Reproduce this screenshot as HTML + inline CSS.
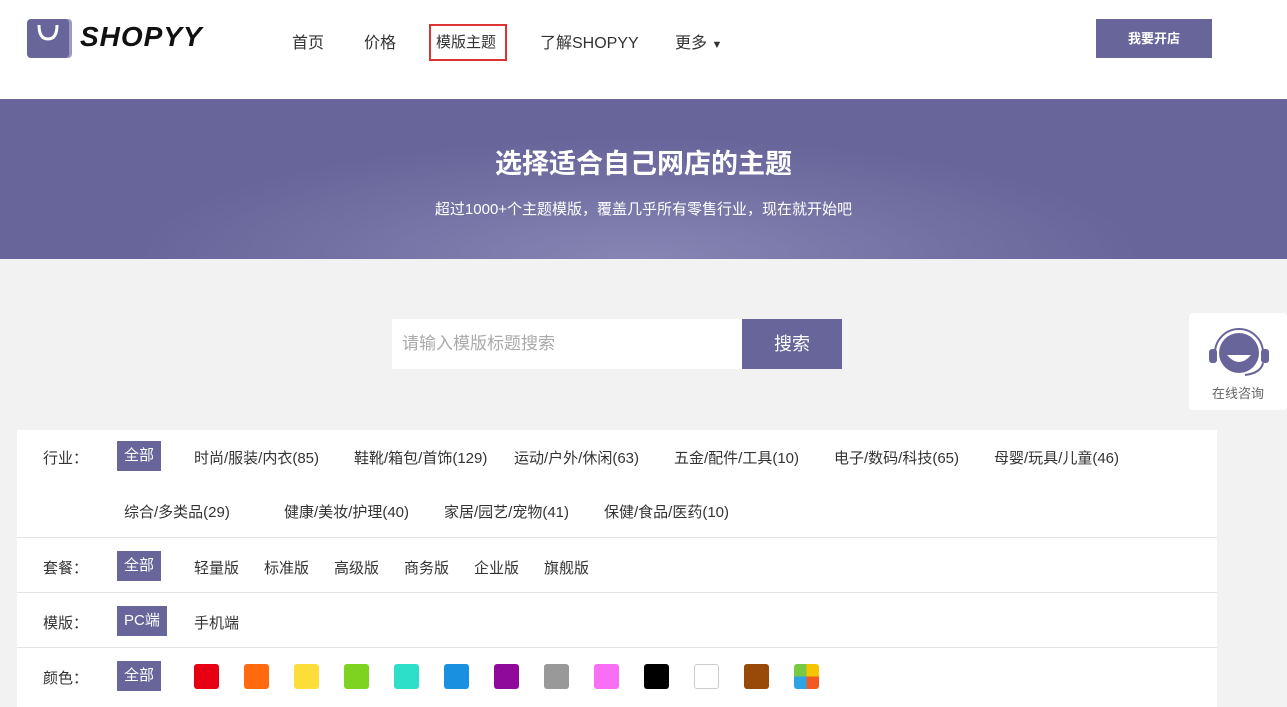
<!DOCTYPE html>
<html><head><meta charset="utf-8"><style>
*{margin:0;padding:0;box-sizing:border-box}
body{width:1287px;height:707px;overflow:hidden;background:#f2f2f2;font-family:"Liberation Sans","Noto Sans CJK SC",sans-serif;color:#333;position:relative}
.hd{position:absolute;left:0;top:0;width:1287px;height:99px;background:#fff}
.logo{position:absolute;left:27px;top:17px}
.logotxt{position:absolute;left:80px;top:21px;font-size:28px;font-weight:bold;font-style:italic;color:#111;letter-spacing:1px}
.nav{position:absolute;top:29px;font-size:16px;color:#333}
.act{position:absolute;left:429px;top:24px;width:78px;height:37px;border:2px solid #d33}
.btn{position:absolute;left:1096px;top:19px;width:116px;height:39px;background:#67659a;color:#fff;font-size:13px;text-align:center;line-height:39px;font-weight:bold}
.ban{position:absolute;left:0;top:99px;width:1287px;height:160px;background:radial-gradient(ellipse 500px 120px at 640px 160px,#8785b3,#67659a)}
.ban h1{position:absolute;width:100%;top:43px;text-align:center;color:#fff;font-size:27px}
.ban p{position:absolute;width:100%;top:99px;text-align:center;color:#fff;font-size:15px}
.srch{position:absolute;left:392px;top:319px;width:350px;height:50px;background:#fff;color:#aaa;font-size:17px;line-height:50px;padding-left:10px}
.sbtn{position:absolute;left:742px;top:319px;width:100px;height:50px;background:#67659a;color:#fff;font-size:18px;text-align:center;line-height:50px}
.kf{position:absolute;left:1189px;top:313px;width:98px;height:97px;background:#fff;border-radius:4px}
.kf span{position:absolute;top:70px;width:100%;text-align:center;font-size:13px;color:#666}
.pan{position:absolute;left:17px;top:430px;width:1200px;height:277px;background:#fff}
.row{position:absolute;left:0;width:1200px;border-bottom:1px solid #e5e5e5}
.t{position:absolute;font-size:15px;color:#333;white-space:nowrap}
.all{position:absolute;background:#67659a;color:#fff;font-size:15px;height:30px;line-height:30px;padding:0 7px}
.sw{position:absolute;top:234px;width:25px;height:25px;border-radius:3px}
</style></head><body>
<div class="hd">
<svg class="logo" width="48" height="42" viewBox="0 0 48 42"><rect x="3" y="2" width="42" height="39" rx="4" fill="#9b99c2"/><rect x="0" y="2" width="42" height="39" rx="4" fill="#67659a"/><path d="M12 8 Q12 22 21 22 Q30 22 30 8" stroke="#fff" stroke-width="3" fill="none"/></svg>
<div class="logotxt">SHOPYY</div>
<div class="nav" style="left:292px">首页</div>
<div class="nav" style="left:364px">价格</div>
<div class="nav" style="left:436px;font-size:15px;top:31px">模版主题</div>
<div class="act"></div>
<div class="nav" style="left:540px">了解SHOPYY</div>
<div class="nav" style="left:675px">更多 <span style="font-size:11px">▼</span></div>
<div class="btn">我要开店</div>
</div>
<div class="ban"><h1>选择适合自己网店的主题</h1><p>超过1000+个主题模版，覆盖几乎所有零售行业，现在就开始吧</p></div>
<div class="srch">请输入模版标题搜索</div><div class="sbtn">搜索</div>
<div class="kf"><svg style="position:absolute;left:16px;top:8px" width="68" height="60" viewBox="0 0 68 60"><path d="M10 32 A24 24 0 0 1 58 32" stroke="#67659a" stroke-width="2" fill="none"/><rect x="4" y="28" width="8" height="14" rx="3" fill="#67659a"/><rect x="56" y="28" width="8" height="14" rx="3" fill="#67659a"/><circle cx="34" cy="32" r="20" fill="#67659a"/><path d="M22 34 Q34 48 46 34" fill="#fff"/><path d="M58 42 Q56 52 40 54" stroke="#67659a" stroke-width="2" fill="none"/></svg><span>在线咨询</span></div>
<div class="pan">
<div class="row" style="top:0;height:108px"></div>
<div class="row" style="top:108px;height:55px"></div>
<div class="row" style="top:163px;height:55px"></div>
<div class="t" style="left:26px;top:17px">行业：</div>
<div class="all" style="left:100px;top:11px">全部</div>
<div class="t" style="left:177px;top:17px">时尚/服装/内衣(85)</div>
<div class="t" style="left:337px;top:17px">鞋靴/箱包/首饰(129)</div>
<div class="t" style="left:497px;top:17px">运动/户外/休闲(63)</div>
<div class="t" style="left:657px;top:17px">五金/配件/工具(10)</div>
<div class="t" style="left:817px;top:17px">电子/数码/科技(65)</div>
<div class="t" style="left:977px;top:17px">母婴/玩具/儿童(46)</div>
<div class="t" style="left:107px;top:71px">综合/多类品(29)</div>
<div class="t" style="left:267px;top:71px">健康/美妆/护理(40)</div>
<div class="t" style="left:427px;top:71px">家居/园艺/宠物(41)</div>
<div class="t" style="left:587px;top:71px">保健/食品/医药(10)</div>
<div class="t" style="left:26px;top:127px">套餐：</div>
<div class="all" style="left:100px;top:121px">全部</div>
<div class="t" style="left:177px;top:127px">轻量版</div><div class="t" style="left:247px;top:127px">标准版</div><div class="t" style="left:317px;top:127px">高级版</div><div class="t" style="left:387px;top:127px">商务版</div><div class="t" style="left:457px;top:127px">企业版</div><div class="t" style="left:527px;top:127px">旗舰版</div>
<div class="t" style="left:26px;top:182px">模版：</div>
<div class="all" style="left:100px;top:176px">PC端</div>
<div class="t" style="left:177px;top:182px">手机端</div>
<div class="t" style="left:26px;top:237px">颜色：</div>
<div class="all" style="left:100px;top:231px">全部</div>
<div class="sw" style="left:177px;background:#e60012"></div>
<div class="sw" style="left:227px;background:#ff6a0e"></div>
<div class="sw" style="left:277px;background:#fddd3a"></div>
<div class="sw" style="left:327px;background:#7ed321"></div>
<div class="sw" style="left:377px;background:#2ddfc9"></div>
<div class="sw" style="left:427px;background:#1991e0"></div>
<div class="sw" style="left:477px;background:#8f0a9a"></div>
<div class="sw" style="left:527px;background:#999"></div>
<div class="sw" style="left:577px;background:#f86ef5"></div>
<div class="sw" style="left:627px;background:#000"></div>
<div class="sw" style="left:677px;background:#fff;border:1px solid #ccc"></div>
<div class="sw" style="left:727px;background:#9a4a08"></div>
<div class="sw" style="left:777px;background:conic-gradient(#f7c400 0 25%,#f25a22 0 50%,#2ea3e4 0 75%,#7ac943 0)"></div>
</div>
</body></html>
